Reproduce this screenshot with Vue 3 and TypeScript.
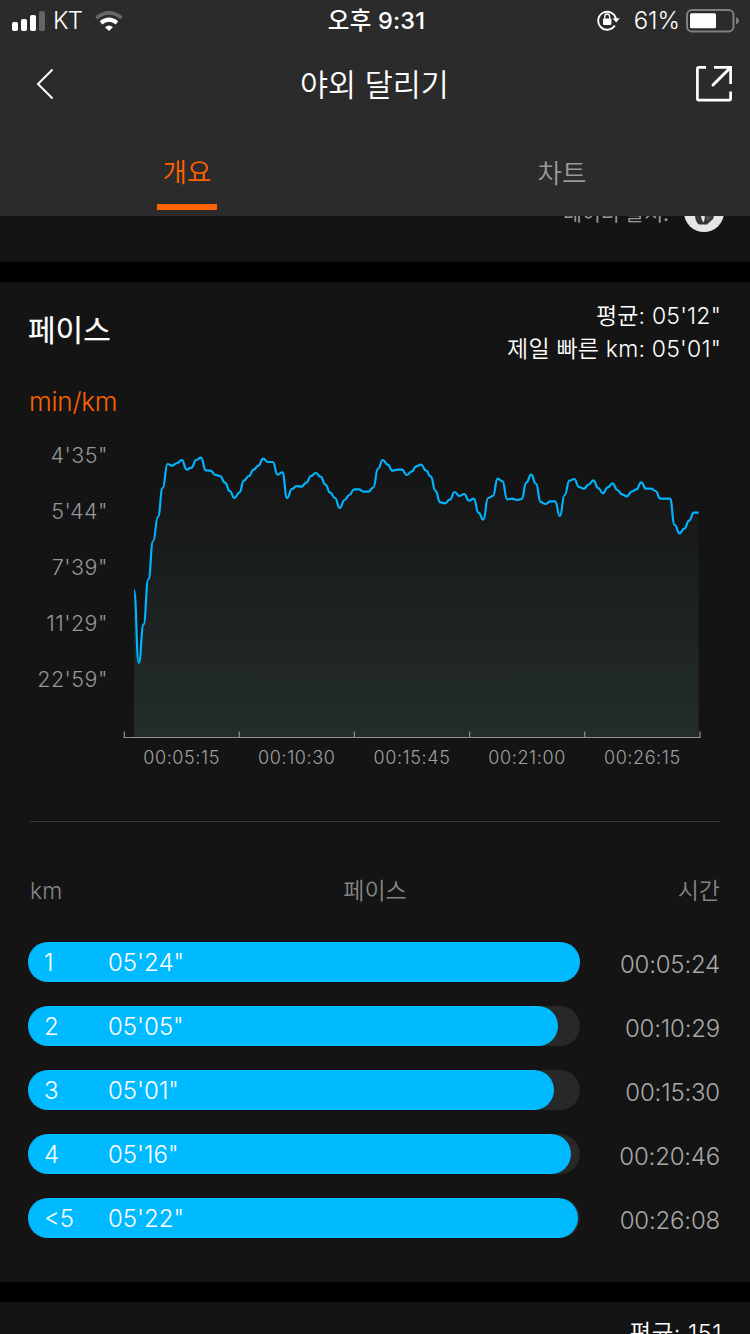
<script setup lang="ts">
interface Split {
  label: string
  pace: string
  time: string
  width: number
}

const splits: Split[] = [
  { label: '1', pace: '05\'24"', time: '00:05:24', width: 552 },
  { label: '2', pace: '05\'05"', time: '00:10:29', width: 530 },
  { label: '3', pace: '05\'01"', time: '00:15:30', width: 526 },
  { label: '4', pace: '05\'16"', time: '00:20:46', width: 543 },
  { label: '<5', pace: '05\'22"', time: '00:26:08', width: 550 },
]

const paceLabels: string[] = ['4\'35"', '5\'44"', '7\'39"', '11\'29"', '22\'59"']
const timeLabels: string[] = ['00:05:15', '00:10:30', '00:15:45', '00:21:00', '00:26:15']

// Pace samples, in thirds of a pixel below the top of the plot
const samples: number[] = [
  450, 669, 553, 418, 303, 231, 144, 72, 77, 69, 60, 89, 83, 60, 53, 91, 92, 105, 108, 128,
  153, 174, 158, 121, 108, 89, 77, 56, 66, 66, 104, 97, 174, 147, 138, 140, 128, 108, 99, 110,
  134, 158, 174, 204, 180, 165, 148, 148, 155, 155, 143, 86, 60, 74, 92, 89, 89, 105, 95, 79,
  74, 91, 109, 152, 187, 190, 179, 156, 168, 162, 182, 176, 218, 239, 174, 168, 116, 124, 178, 176,
  180, 177, 128, 104, 131, 186, 192, 184, 184, 228, 165, 122, 117, 141, 146, 134, 121, 144, 160, 142,
  130, 150, 163, 169, 155, 148, 127, 146, 146, 153, 176, 176, 176, 255, 280, 266, 242, 218, 218,
]

const startX = 14
const step = 4.785
const points = samples.map((v, i) => ({ x: startX + i * step, y: v / 3 }))

const line = points
  .map((p, i) => {
    if (i === 0) return `M${p.x.toFixed(2)} ${p.y.toFixed(2)}`
    const prev = points[i - 1]
    const mid = ((prev.x + p.x) / 2).toFixed(2)
    return `C${mid} ${prev.y.toFixed(2)} ${mid} ${p.y.toFixed(2)} ${p.x.toFixed(2)} ${p.y.toFixed(2)}`
  })
  .join('')
const area = `${line}V297H${startX}Z`
</script>

<template>
  <div class="screen">
    <header class="header">
      <div class="status">
        <div class="status-left">
          <svg class="signal" width="34" height="20" viewBox="0 0 34 20">
            <rect x="0" y="11" width="6" height="9" rx="1.8" fill="#fff" />
            <rect x="9" y="8" width="6" height="12" rx="1.8" fill="#fff" />
            <rect x="18" y="4" width="6" height="16" rx="1.8" fill="#fff" />
            <rect x="27" y="0" width="6" height="20" rx="1.8" fill="#666" />
          </svg>
          <span class="carrier">KT</span>
          <svg class="wifi" width="28" height="20" viewBox="0 0 28 20">
            <path d="M1.4 7Q14 -3.2 26.6 7" fill="none" stroke="#666" stroke-width="3.8" />
            <path d="M6 11.9Q14 5.4 22 11.9" fill="none" stroke="#fff" stroke-width="4" />
            <path d="M14 20L10 16.2Q14 12.6 18 16.2Z" fill="#fff" />
          </svg>
        </div>
        <span class="clock">오후 9:31</span>
        <div class="status-right">
          <svg class="lock" width="24" height="22" viewBox="0 0 24 22">
            <path d="M17.8 15.6A9 9 0 1 1 19 8.8" fill="none" stroke="#fff" stroke-width="1.9" />
            <path d="M15.6 8.2H22.8L19.2 12.4Z" fill="#fff" />
            <rect x="6" y="8.4" width="8.4" height="6.5" rx="0.8" fill="#fff" />
            <path d="M7.8 8.8V6.6a2.4 2.6 0 0 1 4.8 0V8.8" fill="none" stroke="#fff" stroke-width="1.3" />
          </svg>
          <span class="percent">61%</span>
          <svg class="battery" width="54" height="24" viewBox="0 0 54 24">
            <rect x="1" y="1" width="46.5" height="21.5" rx="5" fill="none" stroke="#808080" stroke-width="2" />
            <rect x="4" y="4.2" width="26" height="15" rx="1.5" fill="#fff" />
            <path d="M50 8Q53 9.5 53 11.7T50 15.5Z" fill="#808080" />
          </svg>
        </div>
      </div>

      <div class="nav">
        <svg class="back" width="20" height="32" viewBox="0 0 20 32">
          <path d="M16.5 1.5L2 16L16.5 30.5" fill="none" stroke="#fff" stroke-width="2" />
        </svg>
        <h1 class="title">야외 달리기</h1>
        <svg class="share" width="38" height="38" viewBox="0 0 38 38">
          <path d="M11 2.4H3.8A1.4 1.4 0 0 0 2.4 3.8V33.8A1.4 1.4 0 0 0 3.8 35.2H34.2A1.4 1.4 0 0 0 35.6 33.8V26.5" fill="none" stroke="#fff" stroke-width="2.7" />
          <path d="M19 2.4H35.6V19" fill="none" stroke="#fff" stroke-width="2.7" />
          <path d="M35 3L18 20" fill="none" stroke="#fff" stroke-width="3" stroke-linecap="round" />
        </svg>
      </div>

      <nav class="tabs">
        <div class="tab active"><span>개요</span></div>
        <div class="tab"><span>차트</span></div>
      </nav>
    </header>

    <section class="source">
      <span class="source-label">데이터 출처:</span>
      <svg class="avatar" width="40" height="40" viewBox="0 0 40 40">
        <circle cx="20" cy="20" r="20" fill="#e6e6e6" />
        <path d="M11 22Q11 30 15 32.5L23 32.5L29 27L31 20H11Z" fill="#353535" />
        <path d="M16.5 20Q17 28 19.5 30.5Q21.5 27 20.5 20Z" fill="#e6e6e6" />
        <path d="M22 24L27 25L23 29Z" fill="#555" />
      </svg>
    </section>

    <section class="card">
      <div class="card-head">
        <h2 class="card-title">페이스</h2>
        <div class="summary">
          <div>평균: 05'12"</div>
          <div>제일 빠른 km: 05'01"</div>
        </div>
      </div>
      <div class="unit">min/km</div>

      <div class="chart">
        <div class="y-axis">
          <span v-for="label in paceLabels" :key="label">{{ label }}</span>
        </div>
        <div class="plot">
          <svg width="590" height="300" viewBox="0 0 590 300">
            <defs>
              <linearGradient id="fade" x1="0" y1="18" x2="0" y2="297" gradientUnits="userSpaceOnUse">
                <stop offset="0" stop-color="#141414" />
                <stop offset="0.28" stop-color="#191b1a" />
                <stop offset="0.33" stop-color="#191c1d" />
                <stop offset="1" stop-color="#242d2c" />
              </linearGradient>
            </defs>
            <path :d="area" fill="url(#fade)" />
            <path :d="line" fill="none" stroke="#00b4ff" stroke-width="2.2" stroke-linejoin="round" />
            <path d="M4.3 291.5V297.5H580V291.5M119.3 291.5V297M234.3 291.5V297M349.7 291.5V297M464.8 291.5V297" fill="none" stroke="#8f9392" stroke-width="1.2" />
          </svg>
          <div class="x-axis">
            <span v-for="label in timeLabels" :key="label">{{ label }}</span>
          </div>
        </div>
      </div>

      <div class="divider"></div>

      <div class="table-head">
        <span>km</span>
        <span>페이스</span>
        <span>시간</span>
      </div>

      <div class="splits">
        <div v-for="split in splits" :key="split.label" class="split">
          <div class="track">
            <div class="bar" :style="{ width: split.width + 'px' }">
              <span class="km">{{ split.label }}</span>
              <span class="pace">{{ split.pace }}</span>
            </div>
          </div>
          <span class="time">{{ split.time }}</span>
        </div>
      </div>
    </section>

    <section class="next">평균: 151</section>
  </div>
</template>

<style>
body {
  background: #000;
}
</style>

<style scoped>
.screen {
  width: 750px;
  height: 1334px;
  overflow: hidden;
  background: #000;
  color: #fff;
  font-family: Inter, "Noto Sans CJK KR", sans-serif;
  display: flex;
  flex-direction: column;
}

.header {
  height: 216px;
  flex: none;
  background: #2b2b2b;
}

.status {
  height: 40px;
  display: grid;
  grid-template-columns: 1fr auto 1fr;
  align-items: center;
}

.status-left {
  display: flex;
  align-items: center;
  padding-left: 12px;
}

.carrier {
  margin-left: 7px;
  padding-top: 1px;
  font-size: 24px;
  font-weight: 350;
  line-height: 40px;
  letter-spacing: -0.8px;
}

.wifi {
  margin-left: 13px;
}

.clock {
  padding: 1px 0 0 3px;
  font-size: 23.5px;
  font-weight: 500;
  line-height: 40px;
  letter-spacing: 0.2px;
}

.status-right {
  display: flex;
  align-items: center;
  justify-content: flex-end;
  padding-right: 10px;
}

.percent {
  margin-left: 13px;
  margin-right: 6px;
  padding-top: 1px;
  font-size: 24px;
  font-weight: 350;
  line-height: 40px;
}

.nav {
  height: 88px;
  display: flex;
  align-items: center;
  justify-content: space-between;
  padding: 0 17px 0 36px;
}

.title {
  margin: 0 2px 0 0;
  padding-top: 2px;
  font-size: 30.5px;
  font-weight: 350;
  line-height: 86px;
}

.tabs {
  display: grid;
  grid-template-columns: 1fr 1fr;
  height: 88px;
}

.tab {
  display: flex;
  justify-content: center;
  font-size: 26.5px;
  font-weight: 350;
  line-height: 90px;
  color: #999;
}

.tab span {
  height: 76px;
  width: 60px;
  margin-right: 1px;
  text-align: center;
}

.active {
  line-height: 88px;
  color: #ff6200;
}

.active span {
  border-bottom: 6px solid #ff6200;
}

.source {
  height: 46px;
  flex: none;
  background: #141414;
  overflow: hidden;
  display: flex;
  justify-content: flex-end;
  align-items: flex-start;
  padding-right: 26px;
}

.source-label {
  margin: -20px 15px 0 0;
  font-size: 20.5px;
  line-height: 36px;
  color: #999;
}

.avatar {
  margin-top: -24px;
}

.card {
  flex: none;
  margin-top: 20px;
  height: 1000px;
  background: #141414;
}

.card-head {
  display: flex;
  justify-content: space-between;
  padding: 18px 29px 0 28px;
}

.card-title {
  margin: 5px 0 0;
  font-size: 30px;
  font-weight: 400;
  line-height: 50px;
  -webkit-text-stroke: 0.2px #fff;
}

.summary {
  text-align: right;
  font-size: 23px;
  font-weight: 350;
  line-height: 33px;
  letter-spacing: 0.2px;
}

.unit {
  margin: 16px 0 0 29px;
  font-size: 26px;
  font-weight: 350;
  line-height: 40px;
  letter-spacing: -0.2px;
  color: #ff6200;
}

.chart {
  display: flex;
  margin-top: 18px;
  height: 350px;
}

.y-axis {
  width: 108px;
  margin-right: 12px;
  display: flex;
  flex-direction: column;
  text-align: right;
  font-size: 21.5px;
  font-weight: 350;
  line-height: 56px;
  letter-spacing: 0.5px;
  color: #979797;
  margin-top: -13px;
}

.plot svg {
  display: block;
}

.x-axis {
  display: grid;
  grid-template-columns: repeat(5, 115.2px);
  padding-left: 4px;
  margin-top: 4px;
  text-align: center;
  font-size: 18px;
  font-weight: 350;
  line-height: 27px;
  letter-spacing: 0.6px;
  color: #a0a0a0;
}

.divider {
  height: 1px;
  margin: 31px 30px 0;
  background: #383838;
}

.table-head {
  display: grid;
  grid-template-columns: 1fr 1fr 1fr;
  margin: 49px 30px 0;
  font-size: 23px;
  font-weight: 350;
  line-height: 40px;
  color: #858585;
}

.table-head span:nth-child(2) {
  text-align: center;
}

.table-head span:nth-child(3) {
  text-align: right;
}

.splits {
  display: flex;
  flex-direction: column;
  gap: 24px;
  margin: 31px 30px 0 28px;
}

.split {
  display: flex;
  justify-content: space-between;
  height: 40px;
}

.track {
  width: 552px;
  border-radius: 20px;
  background: #282828;
}

.bar {
  display: flex;
  height: 40px;
  border-radius: 20px;
  background: #00baff;
  font-size: 24px;
  font-weight: 350;
  line-height: 41px;
}

.km {
  width: 64px;
  margin-left: 16px;
}

.pace {
  line-height: 42px;
}

.time {
  font-size: 24px;
  font-weight: 300;
  line-height: 45px;
  letter-spacing: -0.2px;
  color: #a8a8a8;
}

.next {
  flex: none;
  height: 32px;
  margin-top: 20px;
  padding-right: 28px;
  background: #141414;
  overflow: hidden;
  text-align: right;
  font-size: 23.5px;
  font-weight: 350;
  line-height: 63px;
  letter-spacing: 0.5px;
}
</style>
